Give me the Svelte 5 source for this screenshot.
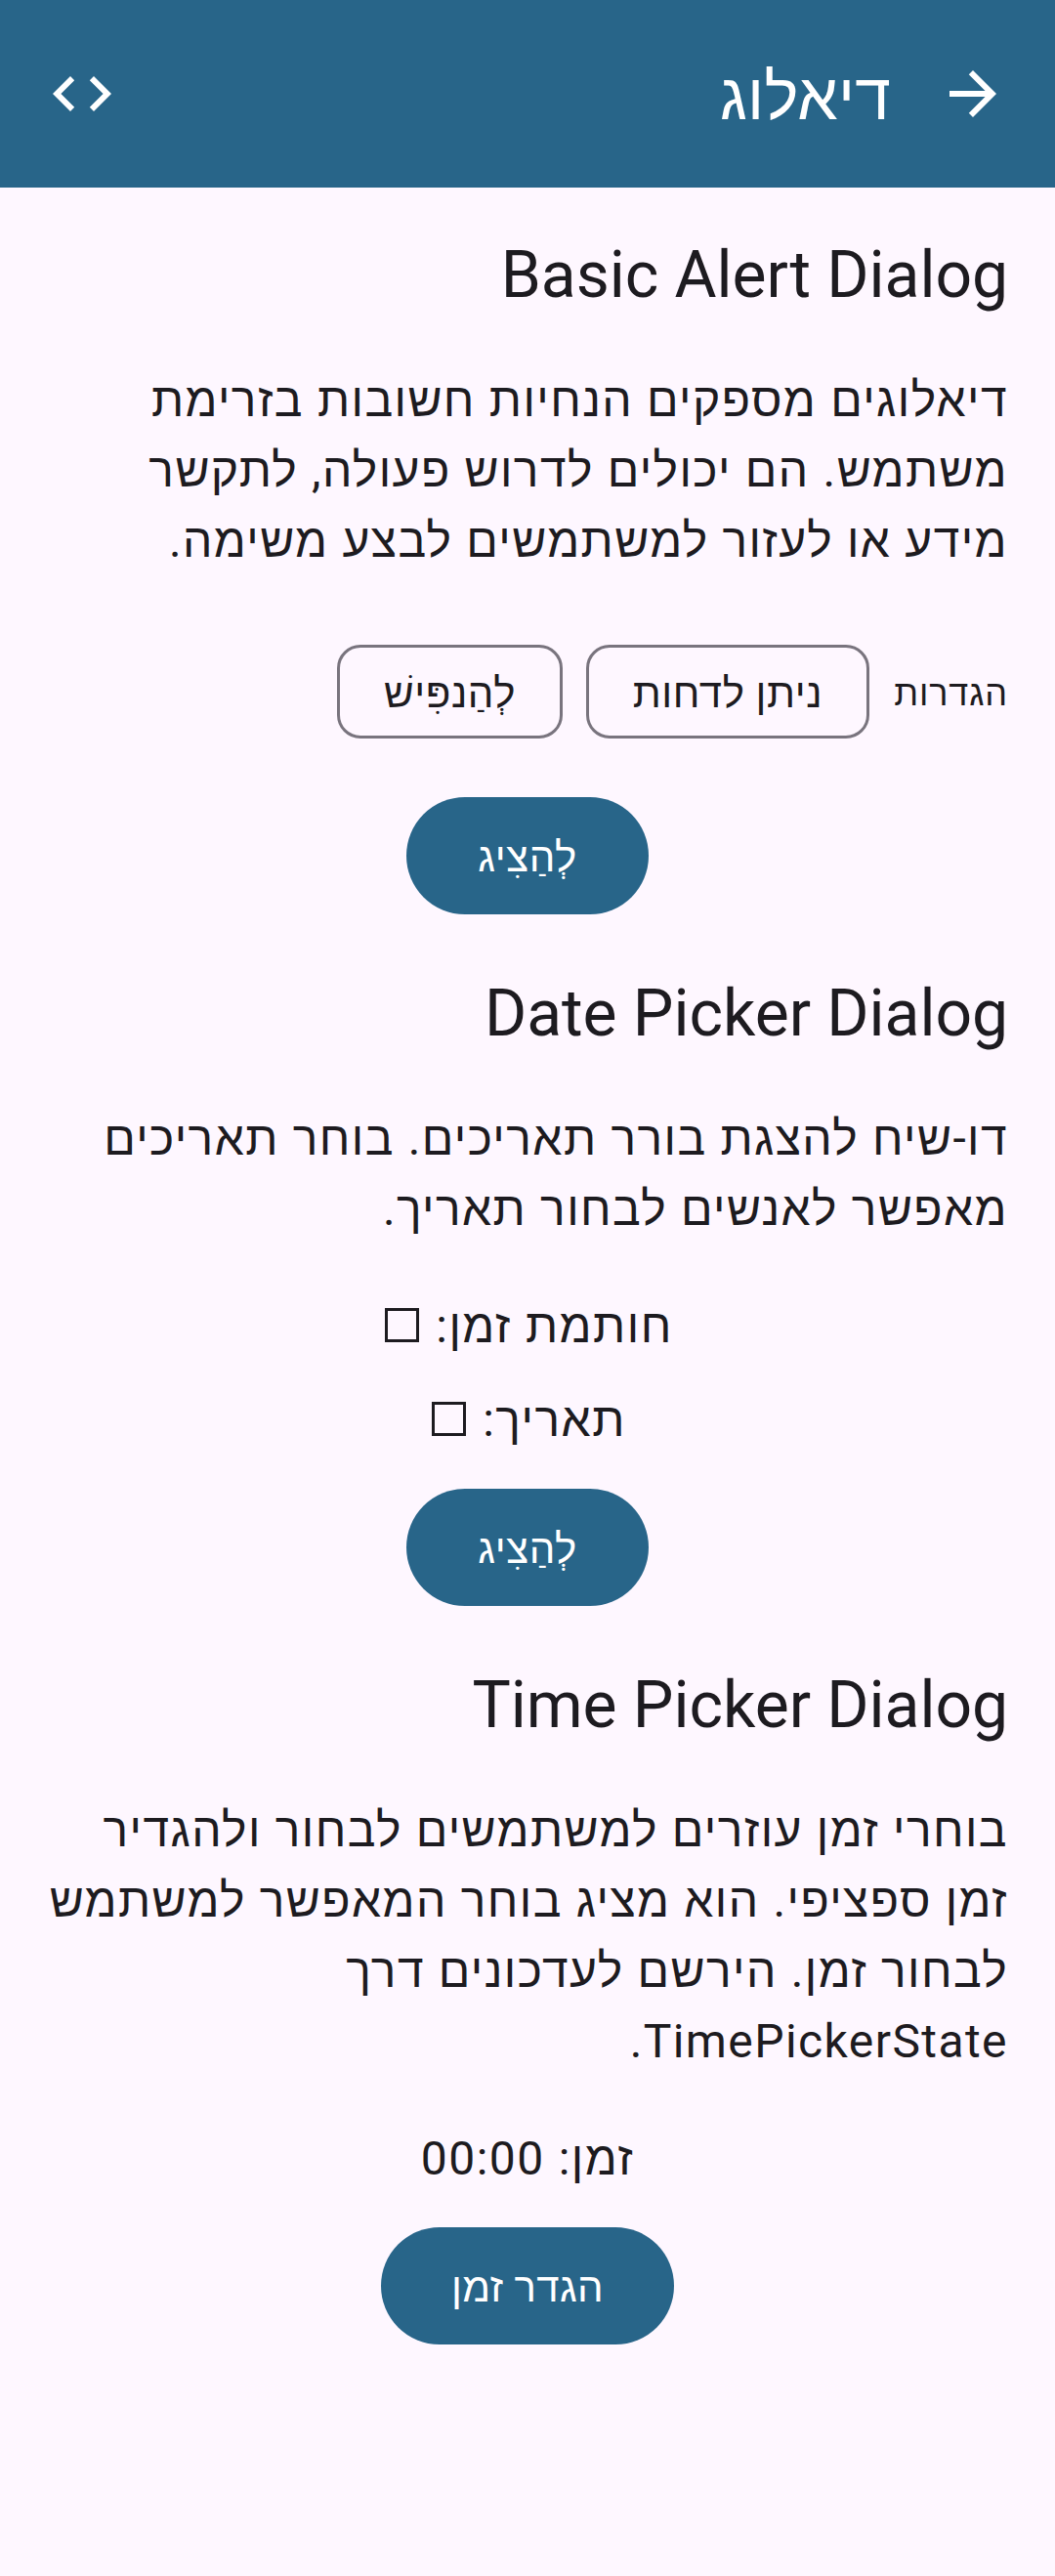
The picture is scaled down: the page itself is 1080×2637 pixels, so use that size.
<script lang="ts">
  const show = 'לְהַצִיג';
</script>

<div class="page" dir="rtl">
  <header>
    <svg viewBox="0 0 24 24"><path d="M12 4l-1.41 1.41L16.17 11H4v2h12.17l-5.58 5.59L12 20l8-8z" /></svg>
    <h1>דיאלוג</h1>
    <svg viewBox="0 0 24 24"><path d="M9.4 16.6L4.8 12l4.6-4.6L8 6l-6 6 6 6 1.4-1.4zm5.2 0l4.6-4.6-4.6-4.6L16 6l6 6-6 6-1.4-1.4z" /></svg>
  </header>
  <main>
    <section>
      <h2>Basic Alert Dialog</h2>
      <p>דיאלוגים מספקים הנחיות חשובות בזרימת<br />משתמש. הם יכולים לדרוש פעולה, לתקשר<br />מידע או לעזור למשתמשים לבצע משימה.</p>
      <div class="chips">
        <span class="label">הגדרות</span>
        <button class="chip dismiss">ניתן לדחות</button>
        <button class="chip animate">לְהַנפִּישׁ</button>
      </div>
      <button class="fill spaced">{show}</button>
    </section>
    <section>
      <h2>Date Picker Dialog</h2>
      <p>דו-שיח להצגת בורר תאריכים. בוחר תאריכים<br />מאפשר לאנשים לבחור תאריך.</p>
      <div class="values">
        <div class="value">חותמת זמן: <i></i></div>
        <div class="value">תאריך: <i></i></div>
      </div>
      <button class="fill">{show}</button>
    </section>
    <section>
      <h2>Time Picker Dialog</h2>
      <p>בוחרי זמן עוזרים למשתמשים לבחור ולהגדיר<br />זמן ספציפי. הוא מציג בוחר המאפשר למשתמש<br />לבחור זמן. הירשם לעדכונים דרך<br />TimePickerState.</p>
      <div class="values">
        <div class="value">זמן: 00:00</div>
      </div>
      <button class="fill wide">הגדר זמן</button>
    </section>
  </main>
</div>

<style>
  :global(body) { margin: 0; background: #fef7ff; }
  .page { width: 1080px; height: 2637px; overflow: hidden; background: #fef7ff; color: #1d1b20; font-family: Roboto, "Liberation Sans", sans-serif; }
  header { box-sizing: border-box; height: 192px; padding: 0 48px; display: flex; align-items: center; background: #286589; color: #fff; }
  header svg { width: 72px; height: 72px; fill: #fff; }
  h1 { margin: 0; margin-inline: 48px auto; padding-top: 7px; font-size: 66px; font-weight: 400; line-height: 84px; letter-spacing: 0.2px; }
  main { padding: 0 48px; }
  section { display: flex; flex-direction: column; }
  section + section { padding-top: 12px; }
  h2 { margin: 0; padding-top: 42px; font-size: 66px; font-weight: 400; line-height: 96px; letter-spacing: -0.05px; white-space: nowrap; }
  p { margin: 44px 0 0; font-size: 48px; line-height: 72px; letter-spacing: 1.42px; word-spacing: 0.6px; white-space: nowrap; }
  .chips { display: flex; align-items: center; height: 96px; margin-top: 70px; gap: 24px; }
  .label { width: 118px; padding-top: 3px; font-size: 36px; letter-spacing: 0.9px; white-space: nowrap; }
  button { font: inherit; margin: 0; white-space: nowrap; letter-spacing: 0.6px; box-sizing: border-box; }
  .chip { height: 96px; padding: 2px 0 0; border: 3px solid #79747e; border-radius: 24px; background: none; color: #1d1b20; font-size: 42px; }
  .dismiss { width: 290px; }
  .animate { width: 231px; }
  .fill { align-self: center; width: 248px; height: 120px; margin-top: 34px; padding: 3px 0 0; border: 0; border-radius: 60px; background: #286589; color: #fff; font-size: 42px; }
  .spaced { margin-top: 60px; }
  .wide { width: 300px; letter-spacing: 0.4px; }
  .values { display: flex; flex-direction: column; align-items: center; gap: 24px; margin-top: 48px; }
  .value { font-size: 48px; line-height: 72px; letter-spacing: 1.5px; word-spacing: 0.6px; white-space: nowrap; }
  i { display: inline-block; box-sizing: border-box; width: 35px; height: 35px; margin-inline: 3px 3px; border: 3px solid; }
</style>
